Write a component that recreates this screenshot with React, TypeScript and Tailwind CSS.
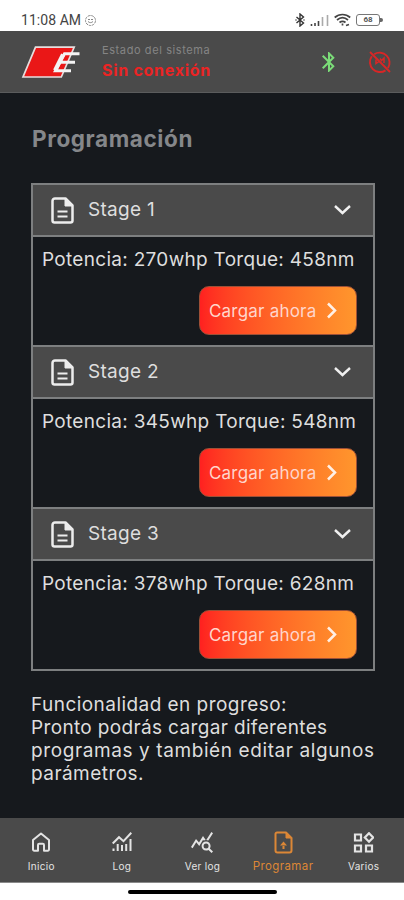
import type { ReactNode } from "react";
import { MdBluetooth, MdQueryStats } from "react-icons/md";

interface Stage {
  name: string;
  power: string;
  torque: string;
}

const stages: Stage[] = [
  { name: "Stage 1", power: "270whp", torque: "458nm" },
  { name: "Stage 2", power: "345whp", torque: "548nm" },
  { name: "Stage 3", power: "378whp", torque: "628nm" },
];

function StatusBar() {
  return (
    <div className="flex h-[31px] shrink-0 items-start bg-white pt-[12px] pl-[21px] pr-[21px] text-[#444]">
      <span className="font-['Roboto'] text-[14px] leading-[17px] tracking-[0.05px] whitespace-nowrap">11:08 AM</span>
      <svg className="mt-[2px] ml-[3px] size-[13px]" viewBox="0 0 13 13" fill="none" stroke="#888">
        <circle cx="6.5" cy="6.5" r="5" strokeDasharray="2.6 0.8" />
        <path d="M4 5.5h2M7 5.5h2M4 7.5c1.500 1.500 3.500 1.500 5 0" />
      </svg>
      <div className="ml-auto flex items-center gap-[5px] pt-[1px]">
        <svg className="h-[14px] w-[10px]" viewBox="0 0 10 14" fill="none" stroke="#333" strokeWidth="1.4">
          <path d="M1.500 4l7 6L5 13V1l3.500 3-7 6" />
          <path d="M.5 7h1M8.500 7h1" />
        </svg>
        <svg className="h-[14px] w-[19px]" viewBox="0 0 19 14" fill="none" strokeWidth="1.600">
          <path d="M1.500 13v-2M5 13V10M8.500 13V8" stroke="#444" />
          <path d="M12.500 13V4M17.500 13V2" stroke="#aaa" />
        </svg>
        <svg className="h-[14px] w-[17px]" viewBox="0 0 17 14" fill="none" stroke="#444" strokeWidth="1.700">
          <path d="M.7 4.500c4.500-4 11-4 15.500 0M3 7c3.500-3 7.500-3 11 0M5.500 9.500c2-1.600 4-1.600 6 0" />
          <path d="M8.500 10.500v2M12 12.500l3-1" />
        </svg>
        <div className="flex items-center">
          <span className="flex h-[12px] w-[24px] items-center justify-center rounded-[3px] border border-[#777] font-['Roboto'] text-[8px] font-bold text-[#555]">68</span>
          <span className="h-[4px] w-[3px] rounded-r-full bg-[#666]" />
        </div>
      </div>
    </div>
  );
}

function Logo() {
  return (
    <svg className="h-[34px] w-[60px] shrink-0" viewBox="0 0 60 34">
      <path d="M14.500 2.200H53.200L40.300 32H2Z" fill="#ea1717" stroke="#e6dede" strokeWidth="1.700" />
      <path d="M58.500 8.800H43.500L34.500 25.800H50M39.500 17.200H54" fill="none" stroke="#f4f4f4" strokeWidth="3" />
      <path d="M42 9.500L34 25.500" stroke="#f4f4f4" strokeWidth="4" />
    </svg>
  );
}

function Header() {
  return (
    <header className="flex h-[62px] shrink-0 items-center border-b border-[#5b5c5d] bg-[#4a4a4a] pr-[12px] pl-[21px]">
      <Logo />
      <div className="ml-[21px] flex flex-col whitespace-nowrap">
        <span className="text-[11px] leading-[17px] tracking-[0.6px] text-[#858585]">Estado del sistema</span>
        <span className="text-[16px] leading-[22px] font-bold tracking-[0.72px] text-[#eb2424]">Sin conexión</span>
      </div>
      <MdBluetooth className="ml-auto size-[24px] text-[#7bdc78]" />
      <svg className="ml-[27px] size-[24px]" viewBox="0 0 24 24" fill="none" stroke="#d92626" strokeWidth="1.900">
        <path d="M6.200 4.200A10 10 0 0 1 20 18M17.500 20.400A10 10 0 0 1 3.800 6.300M2 2l20 20" />
        <path d="M8 9.500v4l3-2M12 8.500l1.500 2L16 8v5" strokeWidth="1.500" />
      </svg>
    </header>
  );
}

function DocumentIcon() {
  return (
    <svg className="h-[27px] w-[23px]" viewBox="0 0 23 27" fill="none" stroke="#ededed" strokeWidth="2.500" strokeLinejoin="round">
      <path d="M4 1.500h10.500L21.500 8.500V23.500a2 2 0 0 1-2 2H3.500a2 2 0 0 1-2-2V4a2.500 2.500 0 0 1 2.500-2.500Z" />
      <path d="M14 2v7h7.500Z" fill="#ededed" strokeWidth="1" />
      <path d="M6.500 14.500h10M6.500 19.500h10" strokeWidth="2" />
    </svg>
  );
}

function StageItem({ name, power, torque }: Stage) {
  return (
    <section className="flex flex-1 flex-col">
      <div className="flex h-[52px] shrink-0 items-center border-b-2 border-[#7d7f80] bg-[#4a4a4a] pr-[22px] pl-[18px]">
        <DocumentIcon />
        <span className="ml-[14px] text-[19px] tracking-[0.3px] text-[#dedede]">{name}</span>
        <svg className="ml-auto h-[10px] w-[17px]" viewBox="0 0 17 10" fill="none" stroke="#f0f0f0" strokeWidth="2.400">
          <path d="M1 1l7.500 7L16 1" />
        </svg>
      </div>
      <div className="flex flex-col px-[9px] pt-[10px]">
        <p className="text-[19px] leading-[26px] tracking-[0.3px] whitespace-nowrap text-[#dedede]">
          Potencia: {power} Torque: {torque}
        </p>
        <button className="mt-[13px] mr-[7px] flex h-[49px] w-[158px] items-center self-end rounded-[10px] border border-[#9d5037] bg-linear-to-r from-[#ff2020] to-[#ff962d] pt-[2px] pl-[9px] text-[17px] whitespace-nowrap text-[#ffd5cb]">
          <span className="tracking-[0.2px]">Cargar ahora</span>
          <svg className="mb-[2px] ml-[11px] h-[17px] w-[10px]" viewBox="0 0 10 17" fill="none" stroke="#fff0e6" strokeWidth="2.500">
            <path d="M1 1.500l7 7-7 7" />
          </svg>
        </button>
      </div>
    </section>
  );
}

function HomeIcon() {
  return (
    <svg className="size-[20px]" viewBox="0 0 20 20" fill="none" stroke="currentColor" strokeWidth="2" strokeLinejoin="round">
      <path d="M2 8L10 1.500 18 8V17.500a1.200 1.200 0 0 1-1.200 1.200H13V13a1.200 1.200 0 0 0-1.200-1.200H8.200A1.200 1.200 0 0 0 7 13v5.700H3.200A1.200 1.200 0 0 1 2 17.500Z" />
    </svg>
  );
}

function ChartIcon() {
  return (
    <svg className="size-[20px]" viewBox="0 0 20 20" fill="none" stroke="currentColor" strokeWidth="2">
      <path d="M.7 11.500L7 5.200l4.500 4L19.300.8" />
      <path d="M1.500 19v-2.500M5.700 19v-7M10 19v-6M14.200 19v-7M18.500 19V7" />
    </svg>
  );
}

function UploadFileIcon() {
  return (
    <svg className="h-[23px] w-[19px]" viewBox="0 0 19 23" fill="none" stroke="currentColor" strokeWidth="2" strokeLinejoin="round">
      <path d="M3 1.500h9L17.500 7v12.500a2 2 0 0 1-2 2h-12a2 2 0 0 1-2-2V3A1.500 1.500 0 0 1 3 1.500Z" />
      <path d="M12 1.500V7h5.500Z" fill="currentColor" strokeWidth="1" />
      <path d="M9.500 10.500l-3.500 4h7ZM8.500 14h2v4h-2Z" fill="currentColor" stroke="none" />
    </svg>
  );
}

function WidgetsIcon() {
  return (
    <svg className="size-[21px]" viewBox="0 0 21 21" fill="none" stroke="currentColor" strokeWidth="2.200">
      <path d="M2 2.500h6v6H2ZM2 13.500h6v6H2ZM13 13.500h6v6h-6ZM16 1.200l4.200 4.300L16 9.800l-4.200-4.300Z" />
    </svg>
  );
}

interface NavItemProps {
  label: string;
  icon: ReactNode;
  active?: boolean;
}

function NavItem({ label, icon, active = false }: NavItemProps) {
  return (
    <div className={`flex w-[80.700px] flex-col items-center ${active ? "text-[#dc8736]" : "text-[#e4e4e4]"}`}>
      <div className="flex h-[24px] items-center">{icon}</div>
      <span
        className={
          active
            ? "mt-[5px] text-[11.500px] leading-[15px] tracking-[0.4px] whitespace-nowrap"
            : "mt-[5px] text-[10px] leading-[14px] tracking-[0.3px] whitespace-nowrap"
        }
      >
        {label}
      </span>
    </div>
  );
}

export default function App() {
  return (
    <div className="flex h-[900px] w-[404px] flex-col overflow-hidden bg-[#16191d] font-['Inter',sans-serif]">
      <StatusBar />
      <Header />
      <main className="flex flex-1 flex-col pr-[29px] pl-[31px]">
        <h1 className="mt-[32px] pl-px text-[22.500px] leading-[28px] font-bold tracking-[0.6px] text-[#85878a]">Programación</h1>
        <div className="mt-[30px] flex h-[488px] flex-col divide-y-2 divide-[#7d7f80] border-2 border-[#7d7f80]">
          {stages.map((stage) => (
            <StageItem key={stage.name} {...stage} />
          ))}
        </div>
        <p className="mt-[22px] text-[19px] leading-[23px] tracking-[0.45px] whitespace-nowrap text-[#dedede]">
          Funcionalidad en progreso:
          <br />
          <span className="tracking-[0.35px]">Pronto podrás cargar diferentes</span>
          <br />
          <span className="tracking-[0.6px]">programas y también editar algunos</span>
          <br />
          parámetros.
        </p>
      </main>
      <nav className="flex h-[65px] shrink-0 border-b border-[#8a8a8a] bg-[#4a4a4a] pt-[12px] pl-[1px]">
        <NavItem label="Inicio" icon={<HomeIcon />} />
        <NavItem label="Log" icon={<ChartIcon />} />
        <NavItem label="Ver log" icon={<MdQueryStats className="size-[24px]" />} />
        <NavItem label="Programar" icon={<UploadFileIcon />} active />
        <NavItem label="Varios" icon={<WidgetsIcon />} />
      </nav>
      <div className="flex h-[17px] shrink-0 justify-center bg-white pt-[7px]">
        <span className="h-[4px] w-[149px] rounded-full bg-black" />
      </div>
    </div>
  );
}
